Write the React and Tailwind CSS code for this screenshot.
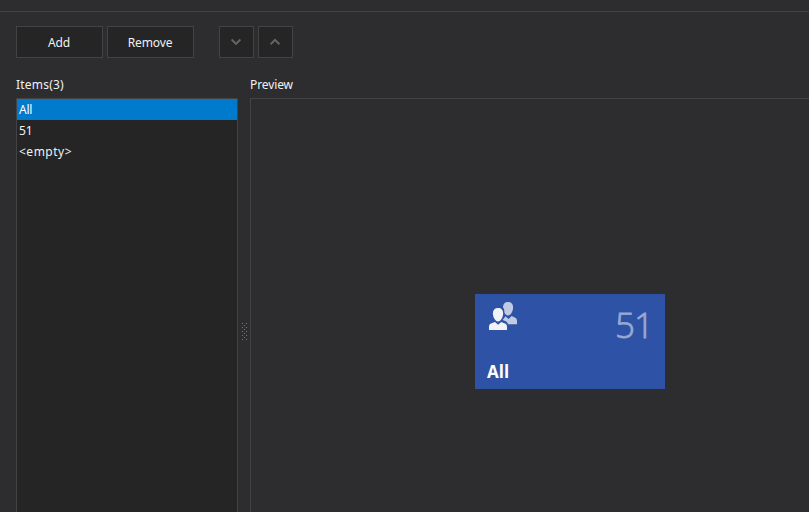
import React from "react";

const items = [
  { label: "All", tracking: "tracking-[-0.2px]" },
  { label: "51", tracking: "tracking-normal" },
  { label: "<empty>", tracking: "tracking-[0.5px]" },
];

function TextButton({ children }) {
  return (
    <button className="flex h-8 w-[87px] items-center justify-center border border-[#434346] bg-[#252526] pt-px pr-px text-[12px] leading-4 tracking-[-0.1px]">
      {children}
    </button>
  );
}

function ArrowButton({ up }) {
  return (
    <button className="flex h-8 w-[35px] items-center justify-center border border-[#434346] bg-[#252526]">
      <svg className="mr-px" width="11" height="8" viewBox="0 0 11 8" fill="none" stroke="#656565" strokeWidth="2">
        <path d={up ? "M.6 6.2 5 1.800 9.400 6.2" : "M.6 1.500 5 5.900 9.400 1.500"} />
      </svg>
    </button>
  );
}

const dots = [0, 1, 2, 3, 4, 5, 6, 7, 8].flatMap((r) =>
  r % 2 === 0 ? [[0, r * 2], [4, r * 2]] : [[2, r * 2]]
);

function Grip() {
  return (
    <svg width="5" height="17" viewBox="0 0 5 17" fill="#77777a" shapeRendering="crispEdges">
      {dots.map(([x, y]) => (
        <rect key={`${x}-${y}`} x={x} y={y} width="1" height="1" />
      ))}
    </svg>
  );
}

function PeopleIcon() {
  return (
    <svg width="30" height="30" viewBox="0 0 30 30">
      <g fill="#c0cae3">
        <path d="M20 1c3.400 0 5.100 2 5.100 5.300 0 3.900-2.200 8.200-5.100 8.200-1.400 0-2.600-1-3.500-2.500C16.400 9.500 16 7.300 15 6.500 15 3 16.800 1 20 1Z" />
        <path d="m17.400 15.300 3.200 2.600 3-2.900 3.700 1.700c1.100.5 1.700 1.500 1.700 3.200v3.300h-9c-.500-1.600-1.300-2.600-2.800-3.200L14.600 19l1.400-1.700c.600-.6 1-1.300 1.400-2Z" />
      </g>
      <g fill="#f1f2f5">
        <path d="M10 7c3.300 0 5.100 2 5.100 5.300 0 3.900-2.200 8.100-5.100 8.100s-5.100-4.200-5.100-8.100C4.900 9 6.700 7 10 7Z" />
        <path d="m7 21 3.100 2.800L13.200 21l3.800 1.600c1.300.6 2 1.600 2 3.400v3H1v-3c0-1.800.700-2.800 2-3.400L7 21Z" />
      </g>
    </svg>
  );
}

function Tile() {
  return (
    <div className="mt-[195px] ml-[224px] flex h-[95px] w-[190px] flex-col justify-between bg-[#2e52a5] pl-3 pr-3">
      <div className="flex justify-between">
        <div className="ml-px mt-[7px]">
          <PeopleIcon />
        </div>
        <div className="mt-[7px] font-['Open_Sans','Noto_Sans',sans-serif] text-[35px] font-light leading-[48px] tracking-[-1px] text-[#97a9d3] [-webkit-text-stroke:0.8px_#97a9d3]">
          51
        </div>
      </div>
      <div className="mb-[6px] font-['Open_Sans','Noto_Sans',sans-serif] text-[17px] font-bold leading-[22px] text-white">
        All
      </div>
    </div>
  );
}

export default function App() {
  return (
    <div className="flex h-[512px] w-[809px] flex-col overflow-hidden bg-[#2d2d30] font-['Noto_Sans','Open_Sans',sans-serif] text-[12px] leading-4 text-[#f1f1f1]">
      <div className="h-3 shrink-0 border-b border-[#434346]" />
      <div className="mt-[14px] flex shrink-0 gap-1 pl-4">
        <TextButton>Add</TextButton>
        <TextButton>Remove</TextButton>
        <div className="ml-[21px] flex gap-1">
          <ArrowButton />
          <ArrowButton up />
        </div>
      </div>
      <div className="mt-[18px] flex min-h-0 flex-1 pl-4">
        <div className="flex w-[222px] flex-col">
          <div className="h-[22px] shrink-0 pt-px tracking-[0.2px]">Items(3)</div>
          <ul className="flex-1 border-x border-t border-[#434346] bg-[#252526]">
            {items.map(({ label, tracking }, i) => (
              <li
                key={label}
                className={`h-[21px] pl-[2px] leading-[21px] ${tracking} ${i === 0 ? "bg-[#007acc] text-white" : ""}`}
              >
                {label}
              </li>
            ))}
          </ul>
        </div>
        <div className="w-3 pl-1 pt-[247px]">
          <Grip />
        </div>
        <div className="flex flex-1 flex-col">
          <div className="h-[22px] shrink-0 pt-px tracking-[-0.1px]">Preview</div>
          <div className="flex-1 border-l border-t border-[#434346]">
            <Tile />
          </div>
        </div>
      </div>
    </div>
  );
}
